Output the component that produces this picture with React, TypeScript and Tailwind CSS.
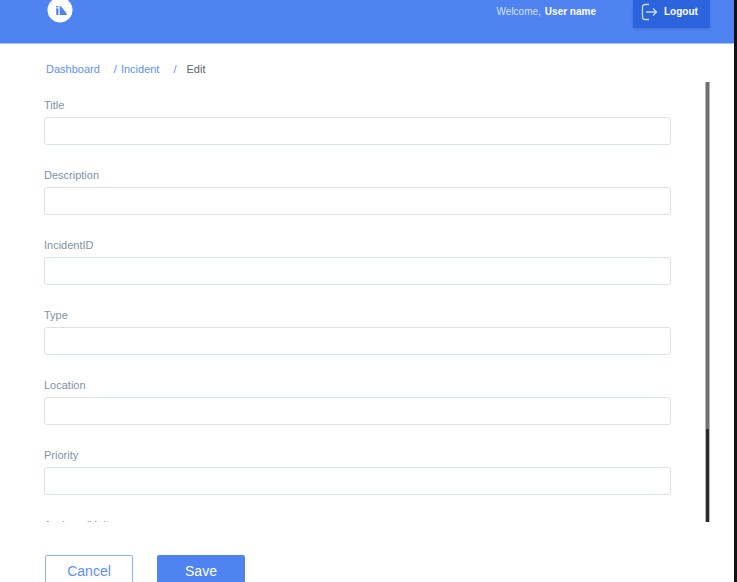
import { useState } from 'react';

const fields = ['Title', 'Description', 'IncidentID', 'Type', 'Location', 'Priority', 'AssignedUnit'];

function Logo() {
  return (
    <svg className="h-[26px] w-[26px]" viewBox="0 0 26 26" aria-label="Home">
      <circle cx="13" cy="13" r="12.5" fill="#fff" />
      <path d="M9.200 9h2.200v1.600H9.200zM9.200 11.200h2.200v6.800H9.200zM12.700 9h1l6 7.500V18h-7z" fill="#4f83f2" />
    </svg>
  );
}

function LogoutIcon() {
  return (
    <svg className="h-[18px] w-[17px]" viewBox="0 0 17 18" fill="none" stroke="#c9dafc" strokeWidth="1.300">
      <path d="M8 1.500H4a2.500 2.500 0 0 0-2.500 2.500v10a2.500 2.500 0 0 0 2.500 2.500h4" />
      <path d="M5 9h10.500M12 5.500 15.500 9 12 12.500" />
    </svg>
  );
}

function Header() {
  return (
    <header className="flex h-11 items-start justify-between border-b border-[#a3c0f9] bg-[#4f83f2] pr-6 pl-[47px]">
      <div className="-mt-[3px]">
        <Logo />
      </div>
      <div className="flex items-start text-[10px] leading-6 text-white">
        <p className="mr-[37px]">
          <span className="mr-1 text-[#d5e2fd]">Welcome,</span>
          <span className="font-bold">User name</span>
        </p>
        <button className="flex h-7 w-[77px] items-start gap-[6px] bg-[#2b64dd] pl-2 font-bold shadow-sm">
          <span className="pt-[3px]">
            <LogoutIcon />
          </span>
          Logout
        </button>
      </div>
    </header>
  );
}

function Breadcrumb() {
  return (
    <nav className="flex pl-[2px] text-[11px] leading-4 text-[#5f8ff7]">
      <a href="#dashboard">Dashboard</a>
      <span className="ml-[14px]">/</span>
      <a href="#incident" className="ml-1">Incident</a>
      <span className="ml-[14px]">/</span>
      <span className="ml-[10px] text-[#5d636b]">Edit</span>
    </nav>
  );
}

export default function App() {
  const [values, setValues] = useState<Record<string, string>>({});

  return (
    <div className="h-screen overflow-hidden border-r-[3px] border-[#111] bg-white font-['Liberation_Sans',Arial,sans-serif]">
      <Header />
      <main className="pt-[17px] pr-6 pl-11">
        <Breadcrumb />
        <form onSubmit={(e) => e.preventDefault()}>
          <div className="mt-[5px] flex h-[440px] justify-between">
            <div className="mr-[34px] flex-1 overflow-hidden pt-[15px]">
              {fields.map((field) => (
                <div key={field} className="h-[70px]">
                  <label htmlFor={field} className="block h-5 text-[11px] leading-4 text-[#7f92a6]">
                    {field}
                  </label>
                  <input
                    id={field}
                    type="text"
                    value={values[field] ?? ''}
                    onChange={(e) => setValues({ ...values, [field]: e.target.value })}
                    className="block h-7 w-full rounded-[3px] border border-[#dce2ec] px-2 text-xs outline-none focus:border-[#4f83f2]"
                  />
                </div>
              ))}
            </div>
            <div className="flex w-[5px] flex-col border-x border-[#b5b5b5] bg-[#2b2b2b]">
              <div className="h-[347px] bg-[#707070]" />
            </div>
          </div>
          <div className="mt-[33px] flex gap-6 pl-px text-[14px]">
            <button type="button" className="h-8 w-[88px] rounded-[2px] border border-[#8eb0fa] text-[#5f8ff7]">
              Cancel
            </button>
            <button type="submit" className="h-8 w-[88px] rounded-[2px] bg-[#4f83f2] text-white">
              Save
            </button>
          </div>
        </form>
      </main>
    </div>
  );
}
